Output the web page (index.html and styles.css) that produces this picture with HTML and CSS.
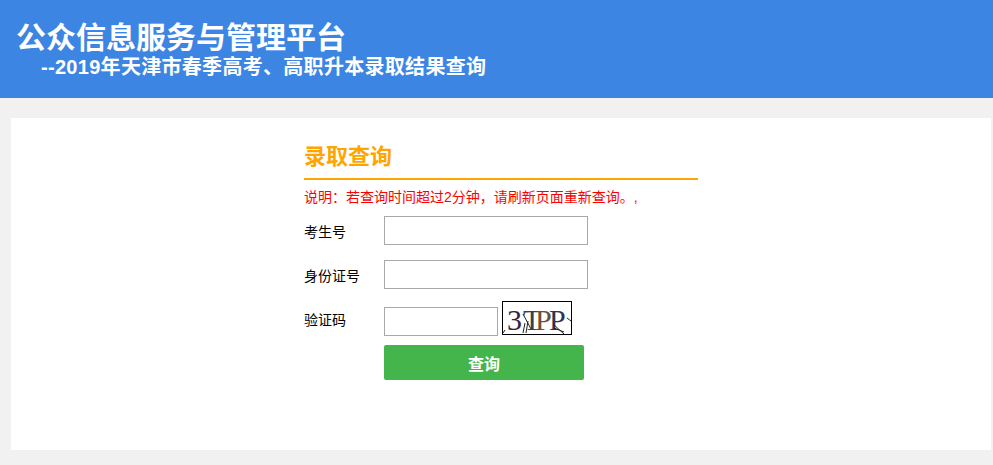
FILE: index.html
```html
<!DOCTYPE html>
<html lang="zh-CN">
  <head>
    <meta charset="UTF-8" />
    <title>公众信息服务与管理平台</title>
    <link rel="stylesheet" href="styles.css">
  </head>
  <body>
    <div class="header">
      <h1 class="site-title">公众信息服务与管理平台</h1>
      <h2 class="site-sub">--2019年天津市春季高考、高职升本录取结果查询</h2>
    </div>

    <div class="main">
      <form class="query" onsubmit="return false">
        <h3 class="query-title">录取查询</h3>
        <p class="notice">说明&#xFF1A;若查询时间超过2分钟&#xFF0C;请刷新页面重新查询。,</p>

        <div class="row">
          <label class="label">考生号</label>
          <input class="field" type="text" />
        </div>
        <div class="row">
          <label class="label">身份证号</label>
          <input class="field" type="text" />
        </div>
        <div class="row row-code">
          <label class="label">验证码</label>
          <input class="field field-code" type="text" />
          <svg class="captcha" width="70" height="34" viewBox="0 0 70 34">
            <defs>
              <linearGradient id="capFill" gradientUnits="userSpaceOnUse" x1="0" y1="0" x2="70" y2="0">
                <stop offset="0.3" stop-color="#3c1f3a" />
                <stop offset="0.3" stop-color="#33414f" />
                <stop offset="0.5" stop-color="#33414f" />
                <stop offset="0.5" stop-color="#6e5036" />
                <stop offset="0.68" stop-color="#6e5036" />
                <stop offset="0.68" stop-color="#2e3350" />
              </linearGradient>
            </defs>
            <rect x="0.5" y="0.5" width="69" height="33" fill="#fff" stroke="#000" />
            <text class="cap-text" x="5 21 33 47" y="29" fill="url(#capFill)">3TPP</text>
            <path d="M21 13L29 28M21 32L23 22M26 20L24 32M1 32L3 29M51 23L62 33M52 27L62 31M65 17L69 20" stroke="#222" stroke-width="1" fill="none" />
          </svg>
        </div>
        <button class="submit" type="submit">查询</button>
      </form>
    </div>
  </body>
</html>
```

FILE: styles.css
```css
* {
  box-sizing: border-box;
}

body {
  margin: 0;
  height: 465px;
  overflow: hidden;
  background-color: #f1f1f1;
  font-family: "Liberation Sans", "Noto Sans CJK SC", sans-serif;
}

.header {
  height: 98px;
  padding: 21px 16px 0;
  background-color: #3d85e3;
  color: #fff;
}
.site-title {
  margin: 0;
  font-size: 30px;
  line-height: 34px;
  font-weight: bold;
}
.site-sub {
  margin: 0;
  padding-left: 25px;
  font-size: 20px;
  line-height: 24px;
  letter-spacing: 0.3px;
  font-weight: bold;
}

.main {
  height: 332px;
  margin: 20px 2px 0 11px;
  padding-left: 293px;
  background-color: #fff;
}

.query {
  width: 394px;
  padding-top: 24px;
}
.query-title {
  height: 38px;
  margin: 0;
  border-bottom: 2px solid #ffa500;
  color: #ffa500;
  font-size: 22px;
  line-height: 30px;
  font-weight: bold;
}
.notice {
  margin: 0;
  height: 36px;
  padding-top: 8px;
  color: #f00;
  font-size: 14px;
  line-height: 18px;
}

.row {
  display: flex;
  align-items: center;
  height: 29px;
  margin-bottom: 15px;
}
.row-code {
  height: 35px;
  margin-top: -3px;
  margin-bottom: 9px;
  align-items: flex-end;
}
.label {
  width: 80px;
  color: #000;
  font-size: 14px;
}
.row-code .label {
  align-self: center;
}
.field {
  width: 204px;
  height: 29px;
  border: 1px solid #a9a9a9;
  background-color: #fff;
}
.field-code {
  width: 114px;
}
.captcha {
  display: block;
  margin-left: 4px;
  align-self: flex-start;
}
.cap-text {
  font-family: "Liberation Serif", serif;
  font-size: 30px;
}

.submit {
  display: block;
  width: 200px;
  height: 35px;
  margin-left: 80px;
  border: 0;
  border-radius: 2px;
  background-color: #44b54b;
  color: #fff;
  font-family: inherit;
  font-size: 16px;
  font-weight: bold;
}
```
